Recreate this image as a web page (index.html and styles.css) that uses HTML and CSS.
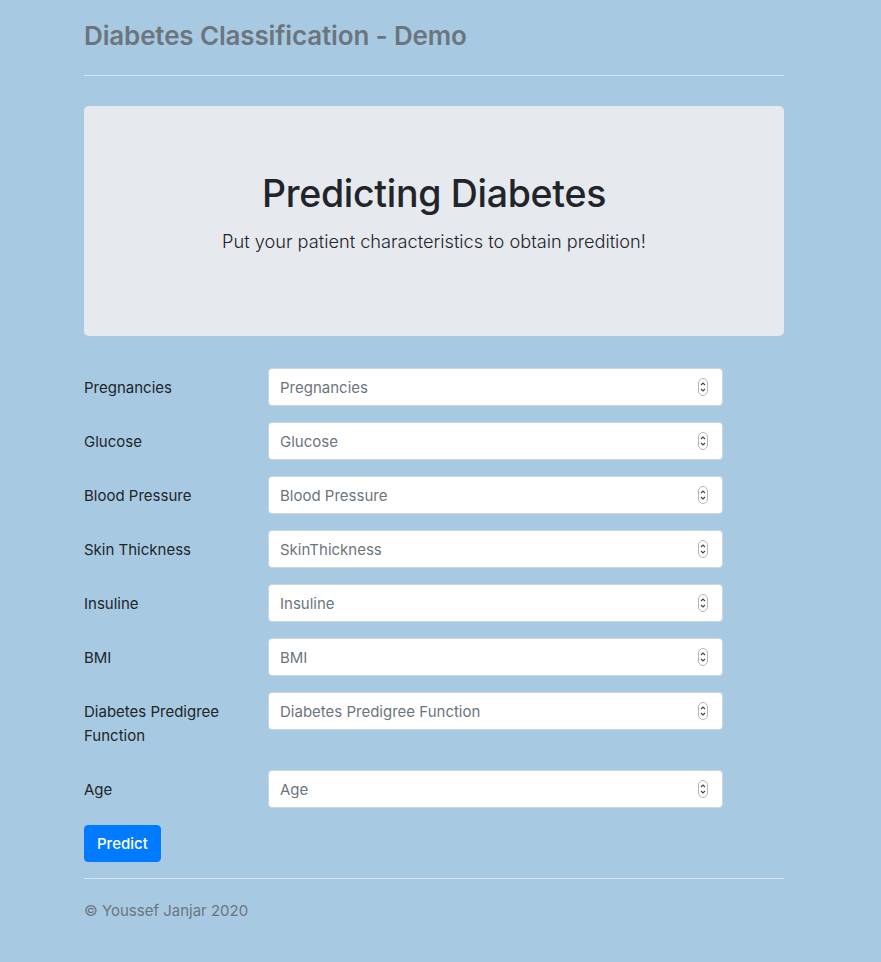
FILE: index.html
```html
<!DOCTYPE html>
<html lang="en">
<head>
<meta charset="utf-8">
<title>Diabetes Classification - Demo</title>
<link rel="stylesheet" href="styles.css">
</head>
<body>
<div class="container">
  <header class="header">
    <h3 class="brand">Diabetes Classification - Demo</h3>
  </header>

  <div class="jumbotron">
    <h1 class="display">Predicting Diabetes</h1>
    <p class="lead">Put your patient characteristics to obtain predition!</p>
  </div>

  <form class="form">
    <div class="form-row"><label class="col-label">Pregnancies</label><div class="field"><input class="input" type="text" placeholder="Pregnancies"><span class="spin"><svg viewBox="0 0 10 18" width="10" height="18"><rect x="0.5" y="0.5" width="9" height="17" rx="4.5" fill="#fff" stroke="#b5b5b5"/><path d="M3 7 L5 5 L7 7 M3 11 L5 13 L7 11" fill="none" stroke="#444" stroke-width="1.1"/></svg></span></div></div>
    <div class="form-row"><label class="col-label">Glucose</label><div class="field"><input class="input" type="text" placeholder="Glucose"><span class="spin"><svg viewBox="0 0 10 18" width="10" height="18"><rect x="0.5" y="0.5" width="9" height="17" rx="4.5" fill="#fff" stroke="#b5b5b5"/><path d="M3 7 L5 5 L7 7 M3 11 L5 13 L7 11" fill="none" stroke="#444" stroke-width="1.1"/></svg></span></div></div>
    <div class="form-row"><label class="col-label">Blood Pressure</label><div class="field"><input class="input" type="text" placeholder="Blood Pressure"><span class="spin"><svg viewBox="0 0 10 18" width="10" height="18"><rect x="0.5" y="0.5" width="9" height="17" rx="4.5" fill="#fff" stroke="#b5b5b5"/><path d="M3 7 L5 5 L7 7 M3 11 L5 13 L7 11" fill="none" stroke="#444" stroke-width="1.1"/></svg></span></div></div>
    <div class="form-row"><label class="col-label">Skin Thickness</label><div class="field"><input class="input" type="text" placeholder="SkinThickness"><span class="spin"><svg viewBox="0 0 10 18" width="10" height="18"><rect x="0.5" y="0.5" width="9" height="17" rx="4.5" fill="#fff" stroke="#b5b5b5"/><path d="M3 7 L5 5 L7 7 M3 11 L5 13 L7 11" fill="none" stroke="#444" stroke-width="1.1"/></svg></span></div></div>
    <div class="form-row"><label class="col-label">Insuline</label><div class="field"><input class="input" type="text" placeholder="Insuline"><span class="spin"><svg viewBox="0 0 10 18" width="10" height="18"><rect x="0.5" y="0.5" width="9" height="17" rx="4.5" fill="#fff" stroke="#b5b5b5"/><path d="M3 7 L5 5 L7 7 M3 11 L5 13 L7 11" fill="none" stroke="#444" stroke-width="1.1"/></svg></span></div></div>
    <div class="form-row"><label class="col-label">BMI</label><div class="field"><input class="input" type="text" placeholder="BMI"><span class="spin"><svg viewBox="0 0 10 18" width="10" height="18"><rect x="0.5" y="0.5" width="9" height="17" rx="4.5" fill="#fff" stroke="#b5b5b5"/><path d="M3 7 L5 5 L7 7 M3 11 L5 13 L7 11" fill="none" stroke="#444" stroke-width="1.1"/></svg></span></div></div>
    <div class="form-row"><label class="col-label">Diabetes Predigree Function</label><div class="field"><input class="input" type="text" placeholder="Diabetes Predigree Function"><span class="spin"><svg viewBox="0 0 10 18" width="10" height="18"><rect x="0.5" y="0.5" width="9" height="17" rx="4.5" fill="#fff" stroke="#b5b5b5"/><path d="M3 7 L5 5 L7 7 M3 11 L5 13 L7 11" fill="none" stroke="#444" stroke-width="1.1"/></svg></span></div></div>
    <div class="form-row"><label class="col-label">Age</label><div class="field"><input class="input" type="text" placeholder="Age"><span class="spin"><svg viewBox="0 0 10 18" width="10" height="18"><rect x="0.5" y="0.5" width="9" height="17" rx="4.5" fill="#fff" stroke="#b5b5b5"/><path d="M3 7 L5 5 L7 7 M3 11 L5 13 L7 11" fill="none" stroke="#444" stroke-width="1.1"/></svg></span></div></div>
    <button type="button" class="btn">Predict</button>
  </form>

  <footer class="footer">
    <p>© Youssef Janjar 2020</p>
  </footer>
</div>
</body>
</html>
```
FILE: styles.css
```css
* { box-sizing: border-box; }
html, body { margin: 0; padding: 0; }
body {
  background: #a7cae2;
  font-family: Inter, "Noto Sans", "Liberation Sans", sans-serif;
  font-size: 16px;
  line-height: 1.5;
  color: #212529;
}
.container {
  width: 700px;
  margin-left: 84px;
  padding-top: 12px;
}
.header {
  border-bottom: 1px solid #d6e6f1;
  padding-bottom: 15px;
  margin-bottom: 30px;
}
.brand {
  margin: 0;
  font-size: 26px;
  font-weight: 600;
  line-height: 48px;
  color: #6c757d;
  letter-spacing: -0.15px;
}
.jumbotron {
  background: #e6e9ee;
  border-radius: 5px;
  padding: 64px 32px;
  text-align: center;
  margin-bottom: 32px;
}
.display {
  margin: 0 0 8px;
  font-size: 37.5px;
  font-weight: 500;
  line-height: 48px;
  color: #212529;
  letter-spacing: -0.3px;
}
.lead {
  margin: 0 0 16px;
  font-size: 18.2px;
  font-weight: 300;
  line-height: 30px;
}
.form-row {
  display: flex;
  align-items: flex-start;
  margin-bottom: 16px;
}
.col-label {
  width: 184px;
  flex: none;
  padding: 8px 30px 6px 0;
  font-size: 15px;
  line-height: 24px;
}
.field {
  position: relative;
  width: 455px;
}
.input {
  display: block;
  width: 100%;
  height: 38px;
  padding: 6px 11px;
  font-family: inherit;
  font-size: 15px;
  line-height: 24px;
  color: #495057;
  background: #fff;
  border: 1px solid #ced4da;
  border-radius: 4px;
}
.input::placeholder { color: #6c757d; opacity: 1; }
.spin {
  position: absolute;
  right: 15px;
  top: 10px;
  display: block;
  line-height: 0;
}
.btn {
  display: inline-block;
  font-family: inherit;
  font-size: 15px;
  font-weight: 500;
  line-height: 24px;
  color: #fff;
  background: #007bff;
  border: 1px solid #007bff;
  border-radius: 4px;
  padding: 6px 12px 5px;
  margin-top: 1px;
}
.footer {
  border-top: 1px solid #d6e6f1;
  margin-top: 16px;
  padding-top: 20px;
  color: #6c757d;
}
.footer p { margin: 0; font-size: 15px; line-height: 24px; }
```
